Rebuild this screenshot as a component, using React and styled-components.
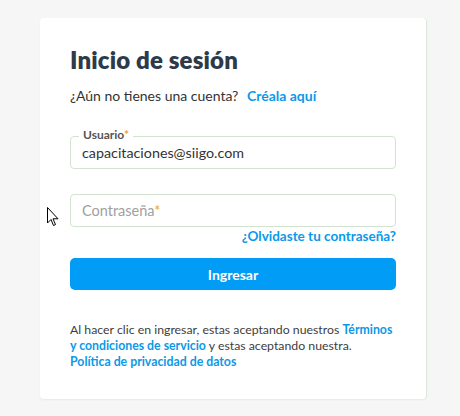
import React from "react";
import styled, { createGlobalStyle } from "styled-components";

const GlobalStyle = createGlobalStyle`
  html, body {
    margin: 0;
    padding: 0;
    background: #f6f6f6;
    font-family: "Lato", "Open Sans", sans-serif;
  }
`;

const Page = styled.div`
  position: relative;
  width: 460px;
  height: 416px;
  padding: 18px 0 0 40px;
  box-sizing: border-box;
`;

const Card = styled.div`
  width: 387px;
  height: 381px;
  box-sizing: border-box;
  padding: 27px 30px 0 30px;
  background: #ffffff;
  border-radius: 4px;
  border-right: 1px solid #dde8dc;
  box-shadow: 0 1px 2px rgba(0, 0, 0, 0.06);
`;

const Title = styled.h1`
  margin: 0;
  font-size: 24px;
  line-height: 30px;
  font-weight: 800;
  color: #2f3a48;
  letter-spacing: 0.15px;
`;

const Subtitle = styled.p`
  margin: 12px 0 0 0;
  font-size: 14px;
  line-height: 18px;
  color: #333;

  a {
    margin-left: 5px;
  }
`;

const Link = styled.a`
  color: #0b99e9;
  font-weight: 700;
  text-decoration: none;
  cursor: pointer;
`;

const Field = styled.div`
  position: relative;
  margin-top: ${(p) => p.$top}px;
`;

const Input = styled.input`
  display: block;
  width: 100%;
  height: 33px;
  box-sizing: border-box;
  padding: 0 11px;
  border: 1px solid #d3e3d1;
  border-radius: 4px;
  font-family: inherit;
  font-size: 14.3px;
  color: #333;
  outline: none;
  background: #fff;
`;

const FloatLabel = styled.label`
  position: absolute;
  left: 9px;
  top: -8px;
  padding: 0 4px;
  background: #fff;
  font-size: 12px;
  line-height: 14px;
  font-weight: 700;
  color: #555;
`;

const Star = styled.span`
  color: #f39c34;
`;

const Placeholder = styled.span`
  position: absolute;
  left: 12px;
  top: 8px;
  font-size: 14.5px;
  line-height: 17px;
  color: #a0a0a0;
  pointer-events: none;
`;

const Forgot = styled.div`
  display: flex;
  justify-content: flex-end;
  margin-top: 1px;
  font-size: 13.5px;
  line-height: 16px;
`;

const Button = styled.button`
  display: block;
  width: 100%;
  height: 32px;
  margin-top: 14px;
  border: none;
  border-radius: 5px;
  background: #009cf5;
  color: #fff;
  font-family: inherit;
  font-size: 14px;
  font-weight: 700;
  cursor: pointer;
`;

const Legal = styled.p`
  margin: 32px 0 0 0;
  font-size: 12.3px;
  line-height: 16px;
  color: #3d3d3d;
`;

const Cursor = styled.svg`
  position: absolute;
  left: 47px;
  top: 207px;
`;

export default function App() {
  return (
    <>
      <GlobalStyle />
      <Page>
        <Card>
          <Title>Inicio de sesión</Title>
          <Subtitle>
            ¿Aún no tienes una cuenta? <Link>Créala aquí</Link>
          </Subtitle>
          <Field $top={31}>
            <FloatLabel>
              Usuario<Star>*</Star>
            </FloatLabel>
            <Input defaultValue="capacitaciones@siigo.com" readOnly />
          </Field>
          <Field $top={25}>
            <Input readOnly />
            <Placeholder>
              Contraseña<Star>*</Star>
            </Placeholder>
          </Field>
          <Forgot>
            <Link>¿Olvidaste tu contraseña?</Link>
          </Forgot>
          <Button>Ingresar</Button>
          <Legal>
            Al hacer clic en ingresar, estas aceptando nuestros{" "}
            <Link>Términos</Link>
            <br />
            <Link>y condiciones de servicio</Link> y estas aceptando nuestra.
            <br />
            <Link>Política de privacidad de datos</Link>
          </Legal>
        </Card>
        <Cursor width="12" height="20" viewBox="0 0 12 20">
          <path
            d="M0.5 0.5 L0.5 16 L4 12.5 L6.5 18.5 L8.5 17.6 L6 11.8 L11 11.8 Z"
            fill="#fff"
            stroke="#000"
            strokeWidth="1"
            strokeLinejoin="miter"
          />
        </Cursor>
      </Page>
    </>
  );
}
